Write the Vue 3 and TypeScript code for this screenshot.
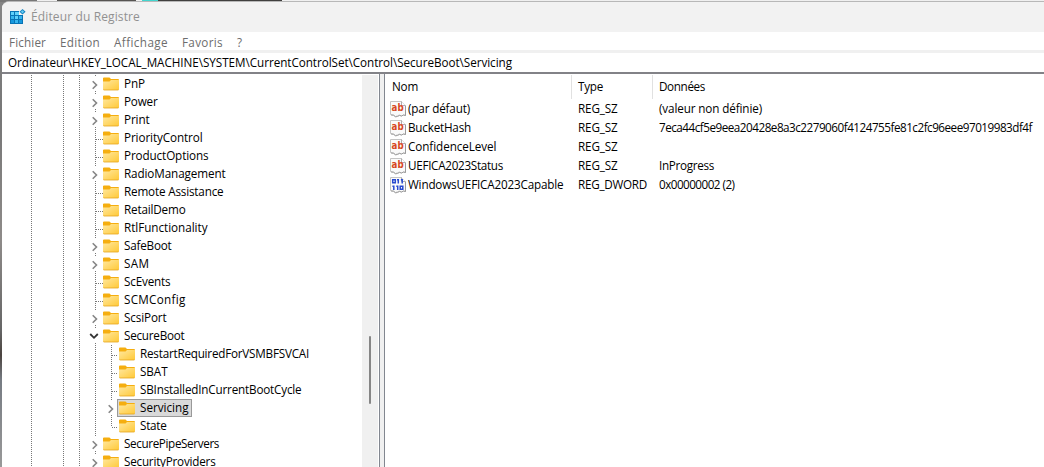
<script setup lang="ts">
import type { Directive } from 'vue'

interface TreeNode { name: string; w: number; chev?: 'right' | 'down'; child?: boolean; selected?: boolean }
interface RegValue { name: string; w: number; type: string; tw: number; data: string; dw: number; binary?: boolean }

/* Fits a label to its intended advance width by tracking. */
const vFit: Directive<HTMLElement, number> = {
  mounted(el, binding) {
    const n = (el.textContent ?? '').length
    if (!n) return
    const natural = el.getBoundingClientRect().width
    el.style.letterSpacing = `${(binding.value - natural) / n}px`
  },
}

const menu = [
  { t: 'Fichier', w: 37 }, { t: 'Edition', w: 40 }, { t: 'Affichage', w: 54 }, { t: 'Favoris', w: 41 }, { t: '?', w: 6 },
]

const nodes: TreeNode[] = [
  { name: 'PnP', w: 21, chev: 'right' },
  { name: 'Power', w: 33.5, chev: 'right' },
  { name: 'Print', w: 25.5, chev: 'right' },
  { name: 'PriorityControl', w: 78.5 },
  { name: 'ProductOptions', w: 84.5 },
  { name: 'RadioManagement', w: 101.5, chev: 'right' },
  { name: 'Remote Assistance', w: 99.5 },
  { name: 'RetailDemo', w: 61.5 },
  { name: 'RtlFunctionality', w: 83.5 },
  { name: 'SafeBoot', w: 47.5, chev: 'right' },
  { name: 'SAM', w: 25.5, chev: 'right' },
  { name: 'ScEvents', w: 46.5 },
  { name: 'SCMConfig', w: 61.5 },
  { name: 'ScsiPort', w: 42.5, chev: 'right' },
  { name: 'SecureBoot', w: 60.5, chev: 'down' },
  { name: 'RestartRequiredForVSMBFSVCAI', w: 169, child: true },
  { name: 'SBAT', w: 27.5, child: true },
  { name: 'SBInstalledInCurrentBootCycle', w: 161.5, child: true },
  { name: 'Servicing', w: 48.5, child: true, chev: 'right', selected: true },
  { name: 'State', w: 26.5, child: true },
  { name: 'SecurePipeServers', w: 95, chev: 'right' },
  { name: 'SecurityProviders', w: 91.5, chev: 'right' },
]

const values: RegValue[] = [
  { name: '(par défaut)', w: 62, type: 'REG_SZ', tw: 39.5, data: '(valeur non définie)', dw: 103 },
  { name: 'BucketHash', w: 63, type: 'REG_SZ', tw: 39.5, data: '7eca44cf5e9eea20428e8a3c2279060f4124755fe81c2fc96eee97019983df4f', dw: 373 },
  { name: 'ConfidenceLevel', w: 88.5, type: 'REG_SZ', tw: 39.5, data: '', dw: 0 },
  { name: 'UEFICA2023Status', w: 95, type: 'REG_SZ', tw: 39.5, data: 'InProgress', dw: 55 },
  { name: 'WindowsUEFICA2023Capable', w: 155.5, type: 'REG_DWORD', tw: 69, data: '0x00000002 (2)', dw: 75.5, binary: true },
]
</script>

<template>
  <div class="desktop">
    <div class="wall"><i class="w1"></i><i class="w2"></i><i class="w3"></i><i class="w4"></i></div>
    <div class="window">
      <header class="title">
        <svg class="logo" width="16" height="16" viewBox="0 0 16 16" shape-rendering="crispEdges">
          <path fill="#0873b4" d="M0 2h10v4h3v9H0z" />
          <path fill="#5fd0fa" d="M1 3h3v3H1zM5 3h4v3H5zM5 7h3v3H5z" />
          <path fill="#36b5ee" d="M1 7h3v3H1zM9 7h3v3H9zM5 11h3v3H5z" />
          <path fill="#1698dd" d="M1 11h3v3H1zM9 11h3v3H9z" />
          <path fill="#f2f2f2" d="M9 2h1v4H9z" />
          <g shape-rendering="auto"><path fill="#1684c2" d="M12.5 0 15.6 2.8 12.5 5.6 9.5 2.8z" /><path fill="#65cff6" d="m12.5 1.3 1.6 1.5-1.6 1.5-1.6-1.5z" /></g>
        </svg>
        <span v-fit="109">Éditeur du Registre</span>
      </header>
      <nav class="menu"><span v-for="m in menu" :key="m.t" v-fit="m.w">{{ m.t }}</span></nav>
      <div class="address"><span v-fit="504">Ordinateur\HKEY_LOCAL_MACHINE\SYSTEM\CurrentControlSet\Control\SecureBoot\Servicing</span></div>
      <main class="panes">
        <section class="tree">
          <div v-for="n in nodes" :key="n.name" class="node" :class="{ child: n.child }">
            <svg class="guides" width="116" height="18" shape-rendering="crispEdges">
              <g fill="none" stroke="#777" stroke-dasharray="1 1">
                <path d="M29.5 0v18M61.5 0v18M77.5 0v18" />
                <template v-if="n.child">
                  <path d="M93.5 0v18" />
                  <path v-if="n.chev" d="M109.5 0v2M109.5 16v2" />
                  <path v-else :d="n.name === 'State' ? 'M109.5 0v10M110 10.5h7' : 'M109.5 0v18M110 10.5h7'" />
                </template>
                <path v-else-if="n.chev" d="M93.5 0v2M93.5 16v2" />
                <path v-else d="M93.5 0v18M94 10.5h7" />
              </g>
            </svg>
            <svg v-if="n.chev" class="chev" :class="n.chev" width="10" height="10" viewBox="0 0 10 10">
              <path v-if="n.chev === 'right'" d="M2.7 1.2 6.5 5 2.7 8.8" />
              <path v-else d="M1.2 3 5 6.8 8.8 3" />
            </svg>
            <span class="key" :class="{ selected: n.selected }">
              <svg width="16" height="14" viewBox="0 0 16 14">
                <defs><linearGradient id="fold" x1="0" y1="0" x2="1" y2="1"><stop offset="0" stop-color="#ffe8a0" /><stop offset="1" stop-color="#ffc937" /></linearGradient></defs>
                <path d="M0 1.3Q0 .5 1 .5h5.5L8 2h7q1 0 1 1v5H0z" fill="#f5ae10" />
                <path d="M0 4.5h6.5L8 3h8v9q0 1-1 1H1q-1 0-1-1z" fill="url(#fold)" />
                <path d="M.3 12.5q.2.5.7.5h14q.6 0 .8-.5" fill="none" stroke="#e4a51e" stroke-width=".8" />
              </svg>
              <span v-fit="n.w" class="label">{{ n.name }}</span>
            </span>
          </div>
        </section>
        <div class="scroll"><i></i></div>
        <div class="splitter"></div>
        <section class="list">
          <div class="row head"><span class="c1"><b v-fit="26">Nom</b></span><span class="c2"><b v-fit="25">Type</b></span><span class="c3"><b v-fit="46">Données</b></span></div>
          <div v-for="v in values" :key="v.name" class="row">
            <span class="c1">
              <svg width="16" height="16" viewBox="0 0 16 16">
                <path d="M.5.5h11l4 4v10l-2-.5-2 1-2-1-2 .8-2 .7-2-1.5-3-.5z" fill="#fafafa" stroke="#c4c4c4" />
                <path d="M11.5.5v4h4" fill="#fff" stroke="#999" stroke-width=".8" />
                <path d="M15.5 5v9.5l-2-.5-2 1-2-.5-2 1-2 .3-2-1.5-2.5-.3" fill="none" stroke="#969696" stroke-width=".9" />
                <g v-if="v.binary" fill="none" stroke="#2849cf" stroke-width="1.5">
                  <path d="M2.7 2.7h2.6v3.1H2.7zM8.3 2v4.5M12.2 2v4.5M7 2.8h1.3M10.9 2.8h1.3M3.8 8.5V13M7.7 8.5V13M2.4 9.3h1.4M6.3 9.3h1.4M10.2 9.2h2.6v3.1h-2.6z" />
                </g>
                <text v-else x="1.6" y="10" textLength="12" lengthAdjust="spacingAndGlyphs">ab</text>
              </svg>
              <b v-fit="v.w">{{ v.name }}</b>
            </span>
            <span class="c2"><b v-fit="v.tw">{{ v.type }}</b></span>
            <span class="c3"><b v-fit="v.dw">{{ v.data }}</b></span>
          </div>
        </section>
      </main>
    </div>
  </div>
</template>

<style>
body { overflow: hidden; }
</style>

<style scoped>
.desktop {
  box-sizing: border-box; width: 1044px; height: 467px; padding: 1px 0 0 2px; overflow: hidden; position: relative;
  background: linear-gradient(#858585 0, #777 120px, #8e8b89 240px, #666 330px, #4b4440 355px, #777c83 380px, #999 467px);
  font: 11.7px/18px "Open Sans", "Noto Sans", sans-serif; color: #000;
}
.wall { position: absolute; left: 0; top: 0; width: 1044px; height: 1px; background: #f0f0f0; }
.wall i { position: absolute; top: 0; height: 2px; }
.w1 { left: 0; width: 37px; background: #777; }
.w2 { left: 57px; width: 79px; background: #565452; }
.w3 { left: 142px; width: 16px; background: #43d5ce; }
.w4 { left: 158px; width: 124px; background: #403f3e; }
.window {
  box-sizing: border-box; position: relative; width: 1042px; height: 466px; display: flex; flex-direction: column;
  border-top: 1px solid #b8b8b8; border-radius: 7px 0 0 0; overflow: hidden; background: #fff;
}
.title { flex: none; height: 30px; display: flex; align-items: center; background: #f2f2f2; color: #919191; padding-left: 8px; font-size: 12px; }
.logo { margin-right: 5px; }
.title span, .menu span, .address span, .label, b { display: inline-block; white-space: nowrap; font-weight: 400; flex: none; }
.menu { flex: none; height: 18px; display: flex; align-items: center; gap: 14px; padding: 2px 0 0 7px; box-sizing: border-box; color: #6d6d6d; }
.address { flex: none; box-sizing: border-box; height: 24px; border-top: 3px solid #f0f0f0; border-bottom: 2px solid #828287; padding-left: 6px; line-height: 19px; }
.panes { flex: 1; min-height: 0; display: flex; }
.tree { width: 360px; flex: none; padding-top: 1px; box-sizing: border-box; overflow: hidden; }
.node { height: 18px; display: grid; grid-template-columns: 90px 9px auto; justify-content: start; position: relative; }
.node.child { grid-template-columns: 106px 9px auto; }
.guides { position: absolute; left: 0; top: 0; }
.chev { grid-column: 2; margin: 5px 0 0 -2px; fill: none; stroke: #858585; stroke-width: 1.6; position: relative; }
.chev.down { stroke: #333; stroke-width: 1.8; margin: 4px 0 0 -3px; }
.key { grid-column: 3; height: 18px; box-sizing: border-box; display: flex; padding: 2px 3px 0 2px; position: relative; }
.key svg { flex: none; margin-right: 5px; }
.label { line-height: 16px; height: 16px; margin-top: -2px; }
.selected { background: #d9d9d9; box-shadow: inset 0 0 0 1px #999; }
.scroll { flex: none; width: 16px; margin: 1px 1px 0 0; background: #f0f0f0; }
.scroll i { display: block; width: 2px; height: 68px; margin: 261px 0 0 7px; background: #868686; border-radius: 1px; }
.splitter { flex: none; box-sizing: border-box; width: 6px; border: 1px solid #828790; border-width: 0 1px; background: #f0f0f0; }
.list { flex: 1; }
.row { height: 19px; line-height: 17px; display: grid; grid-template-columns: 187px 81px 1fr; }
.row span { display: flex; }
.c1 { padding-left: 5px; }
.c1 svg { margin: 1px 2px 0 0; flex: none; overflow: visible; }
.c1 text { font: 700 10.5px "DejaVu Sans", sans-serif; fill: #d74722; }
.c2 { padding-left: 6px; }
.c3 { padding-left: 6px; }
.head { height: 24px; line-height: 22px; margin: 1px 0 1px; }
.head .c1 { padding-left: 7px; }
.head .c1, .head .c2 { border-right: 1px solid #e1e1e1; }
</style>
